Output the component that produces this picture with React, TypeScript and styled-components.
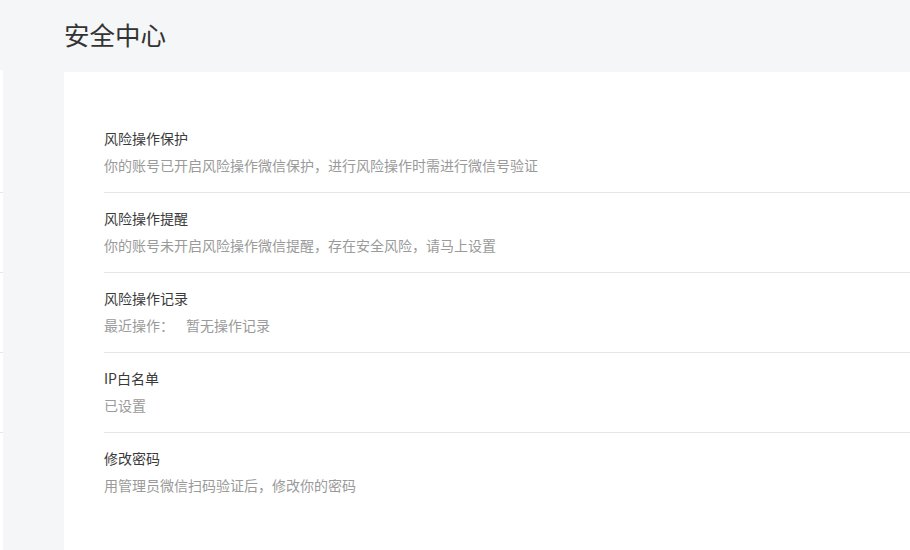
import React, { FC } from "react";
import styled, { createGlobalStyle } from "styled-components";

const GlobalStyle = createGlobalStyle`
    html, body {
        margin: 0;
        padding: 0;
        background-color: #f5f6f8;
        font-family: "Noto Sans CJK SC", "Noto Sans", sans-serif;
    }
`;

const Page = styled.div`
    display: flex;
    width: 910px;
    height: 550px;
    overflow: hidden;
    background-color: #f5f6f8;
`;

// the clipped edge of a side menu, only 3px of it is visible
const SideEdge = styled.div`
    display: flex;
    flex-direction: column;
    flex: 0 0 3px;
    margin-top: 70px;
    background-color: #fff;
`;
const SideItem = styled.div<{ $h: number }>`
    height: ${(p) => p.$h}px;
    border-bottom: 1px solid #e6e6e6;
`;

const Main = styled.div`
    display: flex;
    flex-direction: column;
    flex: 1;
    padding-left: 61px;
`;
const Header = styled.div`
    display: flex;
    align-items: center;
    height: 72px;
`;
const PageTitle = styled.h1`
    margin: 0;
    font-size: 25.5px;
    font-weight: 400;
    line-height: 1;
    color: #333;
    padding-bottom: 4px;
`;
const Card = styled.div`
    flex: 1;
    background-color: #fff;
    padding: 41px 0 0 40px;
`;
const Row = styled.div<{ $last?: boolean }>`
    padding: 14px 0 16px;
    border-bottom: ${(p) => (p.$last ? "none" : "1px solid #e6e6e6")};
`;
const RowTitle = styled.div`
    font-size: 14px;
    line-height: 22px;
    color: #3a3a3a;
`;
const RowDesc = styled.div`
    margin-top: 5px;
    font-size: 14px;
    line-height: 22px;
    color: #9a9a9a;
`;
const Gap = styled.span`
    display: inline-block;
    width: 12px;
`;

const items = [
    {
        title: "风险操作保护",
        desc: "你的账号已开启风险操作微信保护，进行风险操作时需进行微信号验证",
    },
    {
        title: "风险操作提醒",
        desc: "你的账号未开启风险操作微信提醒，存在安全风险，请马上设置",
    },
    {
        title: "风险操作记录",
        desc: (
            <>
                最近操作：
                <Gap />
                暂无操作记录
            </>
        ),
    },
    { title: "IP白名单", desc: "已设置" },
    {
        title: "修改密码",
        desc: "用管理员微信扫码验证后，修改你的密码",
    },
];

const App: FC = () => {
    return (
        <React.Fragment>
            <GlobalStyle />
            <Page>
                <SideEdge>
                    <SideItem $h={122} />
                    <SideItem $h={79} />
                    <SideItem $h={79} />
                    <SideItem $h={79} />
                </SideEdge>
                <Main>
                    <Header>
                        <PageTitle>安全中心</PageTitle>
                    </Header>
                    <Card>
                        {items.map((it, i) => (
                            <Row key={i} $last={i === items.length - 1}>
                                <RowTitle>{it.title}</RowTitle>
                                <RowDesc>{it.desc}</RowDesc>
                            </Row>
                        ))}
                    </Card>
                </Main>
            </Page>
        </React.Fragment>
    );
};

export default App;
